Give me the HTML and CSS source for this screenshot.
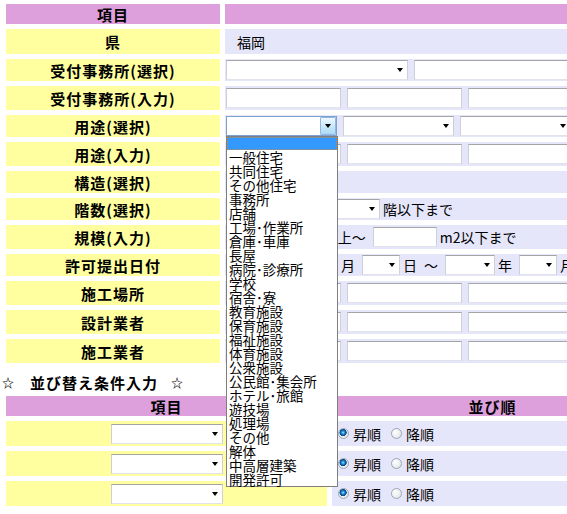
FILE: index.html
```html
<!DOCTYPE html>
<html lang="ja">
<head>
<meta charset="utf-8">
<title>検索条件入力</title>
<link rel="stylesheet" href="styles.css">
</head>
<body>
<div class="page">
  <div class="form">
    <div class="hdr r20">項目</div>
    <div class="hdr"></div>

    <div class="lbl r25">県</div>
    <div class="val"><span class="pref">福岡</span></div>

    <div class="lbl r22">受付事務所(選択)</div>
    <div class="val">
      <div class="sel w182"><select aria-label="受付事務所"></select></div>
      <input class="tx w200" type="text">
    </div>

    <div class="lbl r24">受付事務所(入力)</div>
    <div class="val">
      <input class="tx w115" type="text"><input class="tx w115" type="text"><input class="tx w115" type="text">
    </div>

    <div class="lbl r22">用途(選択)</div>
    <div class="val">
      <div class="sel w111 focus">
        <select aria-label="用途1"></select>
        <span class="btn"></span>
        <ul class="list">
          <li class="blank"></li>
          <li>一般住宅</li>
          <li>共同住宅</li>
          <li>その他住宅</li>
          <li>事務所</li>
          <li>店舗</li>
          <li>工場･作業所</li>
          <li>倉庫･車庫</li>
          <li>長屋</li>
          <li>病院･診療所</li>
          <li>学校</li>
          <li>宿舎･寮</li>
          <li>教育施設</li>
          <li>保育施設</li>
          <li>福祉施設</li>
          <li>体育施設</li>
          <li>公衆施設</li>
          <li>公民館･集会所</li>
          <li>ホテル･旅館</li>
          <li>遊技場</li>
          <li>処理場</li>
          <li>その他</li>
          <li>解体</li>
          <li>中高層建築</li>
          <li>開発許可</li>
        </ul>
      </div>
      <div class="sel w111"><select aria-label="用途2"></select></div>
      <div class="sel w111"><select aria-label="用途3"></select></div>
    </div>

    <div class="lbl r24">用途(入力)</div>
    <div class="val">
      <input class="tx w115" type="text"><input class="tx w115" type="text"><input class="tx w115" type="text">
    </div>

    <div class="lbl r22">構造(選択)</div>
    <div class="val">
      <div class="sel w111"><select aria-label="構造"></select></div>
    </div>

    <div class="lbl r22">階数(選択)</div>
    <div class="val mix">
      <div class="sel w44"><select aria-label="階数から"></select></div>
      <span class="t">階以上～</span>
      <div class="sel w44"><select aria-label="階数まで"></select></div>
      <span class="t">階以下まで</span>
    </div>

    <div class="lbl r24">規模(入力)</div>
    <div class="val mix">
      <input class="tx w74" type="text">
      <span class="t">m2以上～</span>
      <input class="tx w64" type="text">
      <span class="t">m2以下まで</span>
    </div>

    <div class="lbl r22">許可提出日付</div>
    <div class="val mix">
      <div class="sel w50"><select aria-label="年から"></select></div><span class="t">年</span>
      <div class="sel w38"><select aria-label="月から"></select></div><span class="t">月</span>
      <div class="sel w38"><select aria-label="日から"></select></div><span class="t">日</span><span class="t">～</span>
      <div class="sel w50"><select aria-label="年まで"></select></div><span class="t">年</span>
      <div class="sel w38"><select aria-label="月まで"></select></div><span class="t">月</span>
      <div class="sel w38"><select aria-label="日まで"></select></div><span class="t">日</span>
    </div>

    <div class="lbl r24">施工場所</div>
    <div class="val">
      <input class="tx w115" type="text"><input class="tx w115" type="text"><input class="tx w115" type="text">
    </div>

    <div class="lbl r24">設計業者</div>
    <div class="val">
      <input class="tx w115" type="text"><input class="tx w115" type="text"><input class="tx w115" type="text">
    </div>

    <div class="lbl r24">施工業者</div>
    <div class="val">
      <input class="tx w115" type="text"><input class="tx w115" type="text"><input class="tx w115" type="text">
    </div>
  </div>

  <div class="title"><span class="star">☆</span><span class="ttl">並び替え条件入力</span><span class="star">☆</span></div>

  <div class="sort">
    <div class="hdr r20">項目</div>
    <div class="hdr">並び順</div>

    <div class="lbl r25"><div class="sel w112"><select aria-label="並び替え項目1"></select></div></div>
    <div class="rad">
      <label class="opt"><input type="radio" name="o1" checked>昇順</label>
      <label class="opt"><input type="radio" name="o1">降順</label>
    </div>

    <div class="lbl r25"><div class="sel w112"><select aria-label="並び替え項目2"></select></div></div>
    <div class="rad">
      <label class="opt"><input type="radio" name="o2" checked>昇順</label>
      <label class="opt"><input type="radio" name="o2">降順</label>
    </div>

    <div class="lbl r25"><div class="sel w112"><select aria-label="並び替え項目3"></select></div></div>
    <div class="rad">
      <label class="opt"><input type="radio" name="o3" checked>昇順</label>
      <label class="opt"><input type="radio" name="o3">降順</label>
    </div>
  </div>
</div>
</body>
</html>
```
FILE: styles.css
```css
html, body {
  margin: 0;
  padding: 0;
  overflow: hidden;
  background: #fff;
}
body {
  font-family: "Noto Sans CJK JP", "Noto Sans", sans-serif;
  font-size: 14px;
  color: #000;
}
.page {
  width: 680px;
  padding-top: 4px;
}
.form {
  display: grid;
  grid-template-columns: 214px 428px;
  gap: 5px;
  margin-left: 6px;
}
.sort {
  display: grid;
  grid-template-columns: 321px 321px;
  gap: 5px;
  margin-left: 6px;
}
.hdr {
  background: #dda0dd;
  font-weight: bold;
  font-size: 15px;
  letter-spacing: 1px;
  line-height: 1;
  display: flex;
  align-items: center;
  justify-content: center;
}
.lbl {
  background: #ffffa0;
  font-weight: bold;
  font-size: 15px;
  letter-spacing: 1px;
  line-height: 1;
  display: flex;
  align-items: center;
  justify-content: center;
}
.r20 { height: 20px; }
.r22 { height: 22px; }
.r24 { height: 24px; }
.r25 { height: 25px; }

.val {
  background: #e6e6fa;
  display: flex;
  align-items: center;
  gap: 6px;
  padding-left: 1px;
  white-space: nowrap;
  overflow: visible;
}
.val.mix { gap: 0; }
.mix .sel, .mix .tx { margin-right: 3px; }
.mix .t { margin-right: 7px; }
.t { flex: none; line-height: 18px; }
.pref { padding-left: 11px; }

.tx {
  box-sizing: border-box;
  height: 20px;
  margin: 0;
  padding: 0 2px;
  border: 1px solid;
  border-color: #a5a5a5 #cfcfd8 #e2e2ea #cfcfd8;
  background: #fff;
  font: inherit;
  flex: none;
}
.sel {
  box-sizing: border-box;
  height: 20px;
  display: flex;
  align-items: center;
  flex: none;
  border: 1px solid;
  border-color: #a5a5a5 #cfcfd8 #e2e2ea #cfcfd8;
  background: #fff;
  letter-spacing: 0;
}
.sel select {
  flex: 1;
  min-width: 0;
  height: 100%;
  margin: 0;
  padding: 0;
  border: 0;
  background: transparent;
  appearance: none;
  -webkit-appearance: none;
  outline: none;
}
.sel::after {
  content: "";
  flex: none;
  width: 0;
  height: 0;
  margin-right: 4px;
  border-left: 3.5px solid transparent;
  border-right: 3.5px solid transparent;
  border-top: 4px solid #000;
}
.w38 { width: 38px; }
.w44 { width: 44px; }
.w50 { width: 50px; }
.w64 { width: 64px; }
.w74 { width: 74px; }
.w111 { width: 111px; }
.w112 { width: 112px; }
.w115 { width: 115px; }
.w182 { width: 182px; }
.w200 { width: 200px; }

.sel.focus {
  position: relative;
  border-color: #7da2ce;
  z-index: 10;
}
.sel.focus::after { display: none; }
.btn {
  flex: none;
  box-sizing: border-box;
  width: 16px;
  height: 100%;
  border: 1px solid #92b8e2;
  border-radius: 1px;
  background: linear-gradient(#eef8fe, #cbe8fa 50%, #acd9f6);
  display: flex;
  align-items: center;
  justify-content: center;
}
.btn::after {
  content: "";
  width: 0;
  height: 0;
  border-left: 3.5px solid transparent;
  border-right: 3.5px solid transparent;
  border-top: 4px solid #000;
}
.list {
  position: absolute;
  z-index: 20;
  left: -1px;
  top: calc(100% + 1px);
  width: 112px;
  box-sizing: border-box;
  margin: 0;
  padding: 0;
  list-style: none;
  background: #fff;
  border: 1px solid #7f7f7f;
  font-size: 13.5px;
  line-height: 14px;
  white-space: nowrap;
}
.list li {
  height: 14px;
  padding-left: 2px;
}
.list li.blank {
  height: 13px;
  background: #3399ff;
  outline: 1px dotted #c5894a;
  outline-offset: -1px;
}

.title {
  margin: 9px 0 4px 0;
  padding-left: 2px;
  height: 20px;
  display: flex;
  align-items: center;
  font-weight: bold;
  font-size: 15px;
  letter-spacing: 1px;
}
.star {
  font-size: 12px;
  letter-spacing: 0;
}
.ttl {
  margin: 0 13px 0 16px;
}

.rad {
  background: #e6e6fa;
  display: flex;
  align-items: center;
  padding-left: 6px;
  white-space: nowrap;
}
.opt {
  display: flex;
  align-items: center;
  margin-right: 10px;
  line-height: 18px;
}
.opt input {
  appearance: none;
  -webkit-appearance: none;
  box-sizing: border-box;
  width: 11px;
  height: 11px;
  margin: 0 4px 0 0;
  border: 1px solid #9aa7b6;
  border-radius: 50%;
  background: radial-gradient(circle at 35% 35%, #ffffff, #dcdfe4);
}
.opt input:checked {
  background:
    radial-gradient(circle at 45% 40%, #a8ecff 0, #2f9fe2 1.2px, #0e5fa6 2.6px, #0a3f78 3.4px, rgba(0,0,0,0) 3.8px),
    radial-gradient(circle at 35% 35%, #ffffff, #dcdfe4);
}
```
